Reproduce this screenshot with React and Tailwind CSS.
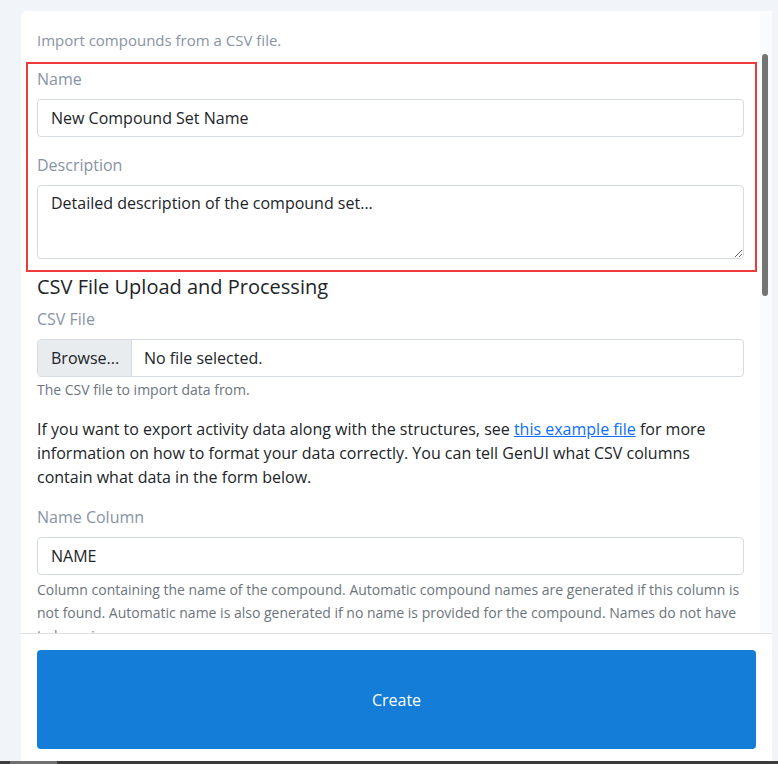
export default function App() {
  const font = { fontFamily: '"Open Sans", "Noto Sans", sans-serif' };
  return (
    <div className="w-[778px] h-[764px] overflow-hidden bg-[#f1f4f9] relative" style={font}>
      <div className="absolute left-[21px] top-[11px] w-[751px] h-[760px] bg-white rounded-md flex flex-col">
        {/* scroll area */}
        <div className="relative h-[622px] overflow-hidden">
          <div className="pl-4 pr-[28px] pt-[19px]">
            <p className="text-[15px] leading-[21px] text-[#8893a4]">Import compounds from a CSV file.</p>
            <div className="mt-[11px] -ml-[11px] -mr-[13px] pl-[9px] pr-[11px] pt-[3px] pb-[11px] border-2 border-[#ef3b3b]">
              <label className="block text-[16px] leading-6 text-[#8893a4] mb-2">Name</label>
              <input
                readOnly
                value="New Compound Set Name"
                className="block w-full h-[38px] px-[13px] border border-[#d6dbe3] rounded-[4px] text-[16px] text-[#212529] outline-none"
                style={font}
              />
              <label className="block text-[16px] leading-6 text-[#8893a4] mt-4 mb-2">Description</label>
              <textarea
                readOnly
                value="Detailed description of the compound set..."
                className="block w-full h-[74px] px-[13px] py-[5px] border border-[#d6dbe3] rounded-[4px] text-[16px] leading-6 text-[#212529] outline-none resize-y"
                style={font}
              />
            </div>
            <h2 className="text-[20px] leading-[30px] text-[#212529]">CSV File Upload and Processing</h2>
            <label className="block text-[16px] leading-6 text-[#8893a4] mt-[5px] mb-2">CSV File</label>
            <div className="flex h-[38px] border border-[#d6dbe3] rounded-[4px] overflow-hidden text-[16px] text-[#212529]">
              <div className="w-[94px] bg-[#e9ecef] border-r border-[#d6dbe3] flex items-center pl-[13px]">Browse...</div>
              <div className="flex items-center pl-[12px]">No file selected.</div>
            </div>
            <p className="mt-[2px] text-[14px] leading-[22px] text-[#6c757d]">The CSV file to import data from.</p>
            <p className="mt-[16px] text-[16px] leading-6 text-[#212529]">
              If you want to export activity data along with the structures, see{" "}
              <a className="text-[#0d6efd] underline" href="#">this example file</a> for more information on how to format your data correctly. You can tell GenUI what CSV columns contain what data in the form below.
            </p>
            <label className="block text-[16px] leading-6 text-[#8893a4] mt-[16px] mb-2">Name Column</label>
            <input
              readOnly
              value="NAME"
              className="block w-full h-[38px] px-[13px] border border-[#d6dbe3] rounded-[4px] text-[16px] text-[#212529] outline-none"
              style={font}
            />
            <p className="mt-[3px] text-[14px] leading-[23px] text-[#6c757d]">
              Column containing the name of the compound. Automatic compound names are generated if this column is not found. Automatic name is also generated if no name is provided for the compound. Names do not have to be unique.
            </p>
          </div>
          {/* scrollbar */}
          <div className="absolute right-0 top-0 bottom-0 w-[12px] bg-[#fafbfc]"></div>
          <div className="absolute right-[4px] top-[43px] w-[6px] h-[242px] rounded-full bg-[#747474]"></div>
        </div>
        {/* footer */}
        <div className="border-t border-[#dee2e6] px-4 pt-4">
          <button className="w-full h-[99px] bg-[#137dd7] text-white text-[16px] rounded-[4px]" style={font}>Create</button>
        </div>
      </div>
      {/* bottom horizontal scrollbar */}
      <div className="absolute left-0 bottom-0 w-full h-[3px] bg-[#3c3c3c]">
        <div className="ml-[10px] w-[47px] h-full bg-[#707070]"></div>
      </div>
    </div>
  );
}
